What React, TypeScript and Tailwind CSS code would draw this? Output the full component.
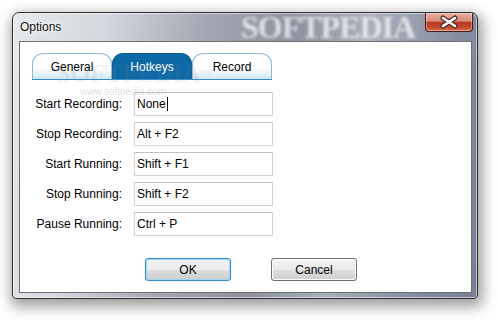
import React from "react";

const font = { fontFamily: '"Liberation Sans", Arial, sans-serif' };

function Tab({ label, active }: { label: string; active?: boolean }) {
  return (
    <div
      className={
        "w-[80px] h-[26px] rounded-t-[11px] border border-b-0 flex items-center justify-center text-[12px] " +
        (active
          ? "bg-[#0d68a6] border-[#0b5a92] text-white"
          : "bg-[linear-gradient(180deg,#ffffff_0%,#ffffff_55%,#e6f2fa_80%,#cfe6f5_100%)] border-[#8dbbdc] text-black")
      }
    >
      {label}
    </div>
  );
}

function Row({ label, value, caret }: { label: string; value: string; caret?: boolean }) {
  return (
    <div className="flex items-center h-[24px]">
      <div className="w-[103px] text-right text-[12px] text-black pr-[1px]">{label}</div>
      <div className="ml-[11px] w-[139px] h-[24px] border border-[#d3d3d3] border-t-[#c2c2c2] bg-white flex items-center pl-[2px] text-[12px] text-black">
        <span>{value}</span>
        {caret && <span className="inline-block w-[1px] h-[14px] bg-black ml-[1px]" />}
      </div>
    </div>
  );
}

function Button({ label, def }: { label: string; def?: boolean }) {
  return (
    <div
      className={
        "w-[86px] h-[23px] rounded-[3px] border flex items-center justify-center text-[12px] text-black bg-[linear-gradient(180deg,#f2f2f2_0%,#ebebeb_50%,#dddddd_51%,#cfcfcf_100%)] " +
        (def
          ? "border-[#3c8fd0] shadow-[inset_0_0_0_1px_#9fd6f6,0_0_2px_#cfe9f8]"
          : "border-[#707070] shadow-[inset_0_0_0_1px_#fbfbfb]")
      }
    >
      {label}
    </div>
  );
}

export default function App() {
  return (
    <div className="w-[498px] h-[320px] bg-white overflow-hidden pt-[12px] pl-[12px]" style={font}>
      <div className="relative w-[466px] h-[287px] rounded-t-[7px] rounded-b-[4px] border border-[#2e2e2e] flex flex-col bg-[linear-gradient(100deg,#e6e9ed_0%,#d4d8de_18%,#a3a7b3_38%,#8d919f_55%,#a9aebb_70%,#868ca0_88%,#777e95_100%)] shadow-[2px_5px_14px_3px_rgba(0,0,0,0.38),inset_0_0_0_1px_rgba(255,255,255,0.55)]">
        {/* title bar */}
        <div className="relative h-[28px] shrink-0">
          <div className="absolute left-[228px] top-[-1px] text-[32px] leading-[30px] font-bold tracking-[-1px] text-white/70 blur-[1.4px] select-none" style={{ fontFamily: '"Liberation Serif", serif' }}>
            SOFTPEDIA
          </div>
          <div className="absolute left-[7px] top-[7px] text-[12px] leading-[14px] text-[#111] [text-shadow:0_0_6px_#fff,0_0_3px_#fff]">
            Options
          </div>
          <div className="absolute right-[4px] top-0 w-[48px] h-[19px] rounded-b-[4px] border border-t-0 border-[#4b1d16] overflow-hidden bg-[linear-gradient(180deg,#eab1a3_0%,#d98a77_45%,#b93a22_52%,#c24a2c_80%,#d8765a_100%)] shadow-[inset_0_0_0_1px_rgba(255,255,255,0.35)]">
            <svg width="48" height="19" viewBox="0 0 48 19" className="absolute left-[-1px] top-0">
              <path d="M18 5 L30 13 M30 5 L18 13" stroke="#4a2a25" strokeWidth="5" strokeLinecap="round" />
              <path d="M18 5 L30 13 M30 5 L18 13" stroke="#ffffff" strokeWidth="2.6" strokeLinecap="round" />
            </svg>
          </div>
        </div>
        {/* client */}
        <div className="relative ml-[6px] mr-[5px] mb-[5px] flex-1 bg-white border border-[#6f6f6f] flex flex-col">
          <div className="flex pl-[12px] mt-[11px]">
            <div className="flex border-b border-[#3b8bc3]">
              <Tab label="General" />
              <Tab label="Hotkeys" active />
              <Tab label="Record" />
            </div>
          </div>
          <div className="flex flex-col gap-[6px] mt-[12px]">
            <Row label="Start Recording:" value="None" caret />
            <Row label="Stop Recording:" value="Alt + F2" />
            <Row label="Start Running:" value="Shift + F1" />
            <Row label="Stop Running:" value="Shift + F2" />
            <Row label="Pause Running:" value="Ctrl + P" />
          </div>
          <div className="flex gap-[40px] pl-[125px] mt-[22px]">
            <Button label="OK" def />
            <Button label="Cancel" />
          </div>
          {/* watermark */}
          <div className="pointer-events-none absolute left-[36px] top-[18px] text-[26px] leading-[28px] font-bold tracking-[-0.5px] text-[#8a8f96]/15 select-none" style={{ fontFamily: '"Liberation Serif", serif' }}>
            SOFTPEDIA<span className="text-[9px] align-top ml-[2px]">™</span>
          </div>
          <div className="pointer-events-none absolute left-[60px] top-[44px] text-[10px] leading-[11px] text-[#8a8f96]/30 select-none">
            www.softpedia.com
          </div>
        </div>
      </div>
    </div>
  );
}
